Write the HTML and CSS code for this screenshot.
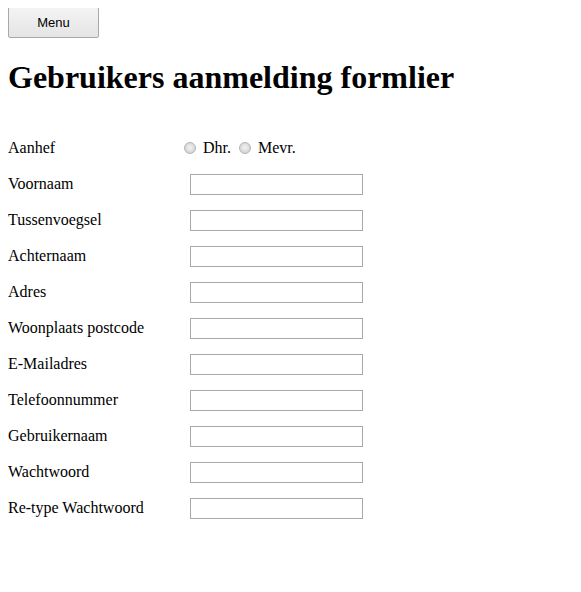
FILE: index.html
```html
<!DOCTYPE html>
<html>
<head>
<meta charset="utf-8">
<link rel="stylesheet" href="styles.css">
</head>
<body>
<button class="menu-btn">Menu</button>
<h1 class="title">Gebruikers aanmelding formlier</h1>
<form class="form">
  <div class="row">
    <span class="label">Aanhef</span>
    <span class="radios">
      <input type="radio" name="aanhef" class="radio"> Dhr. <input type="radio" name="aanhef" class="radio"> Mevr.
    </span>
  </div>
  <div class="row"><span class="label">Voornaam</span><input type="text" class="field"></div>
  <div class="row"><span class="label">Tussenvoegsel</span><input type="text" class="field"></div>
  <div class="row"><span class="label">Achternaam</span><input type="text" class="field"></div>
  <div class="row"><span class="label">Adres</span><input type="text" class="field"></div>
  <div class="row"><span class="label">Woonplaats postcode</span><input type="text" class="field"></div>
  <div class="row"><span class="label">E-Mailadres</span><input type="text" class="field"></div>
  <div class="row"><span class="label">Telefoonnummer</span><input type="text" class="field"></div>
  <div class="row"><span class="label">Gebruikernaam</span><input type="text" class="field"></div>
  <div class="row"><span class="label">Wachtwoord</span><input type="password" class="field"></div>
  <div class="row"><span class="label">Re-type Wachtwoord</span><input type="password" class="field"></div>
</form>
</body>
</html>
```
FILE: styles.css
```css
body {
  margin: 8px;
  font-family: "Liberation Serif", "Times New Roman", serif;
  font-size: 16px;
  color: #000;
  background: #fff;
}
.menu-btn {
  display: block;
  width: 91px;
  height: 31px;
  margin-top: -1px;
  font-family: "Liberation Sans", Arial, sans-serif;
  font-size: 13px;
  color: #000;
  background: linear-gradient(#f4f4f4, #e4e4e4);
  border: 1px solid #a9a9a9;
  border-radius: 2px;
}
.title {
  font-size: 32px;
  font-weight: bold;
  margin: 21px 0 34px;
}
.form {
  display: flex;
  flex-direction: column;
}
.row {
  display: grid;
  grid-template-columns: 182px auto;
  align-items: center;
  height: 36px;
}
.label {
  line-height: 20px;
}
.radios {
  margin-left: -6px;
  display: flex;
  align-items: center;
}
.radio {
  -webkit-appearance: none;
  appearance: none;
  box-sizing: border-box;
  width: 12px;
  height: 12px;
  margin: 0 7px 0 0;
  border: 1px solid #b4b4b4;
  border-radius: 50%;
  background: radial-gradient(circle at 50% 45%, #f2f2f2 0%, #dcdcdc 55%, #c8c8c8 100%);
}
.radios .radio + .radio {
  margin-left: 8px;
}
.field {
  box-sizing: border-box;
  width: 173px;
  height: 21px;
  border: 1px solid #a9a9a9;
  padding: 1px 2px;
  margin: 0;
  font-size: 13px;
}
```
